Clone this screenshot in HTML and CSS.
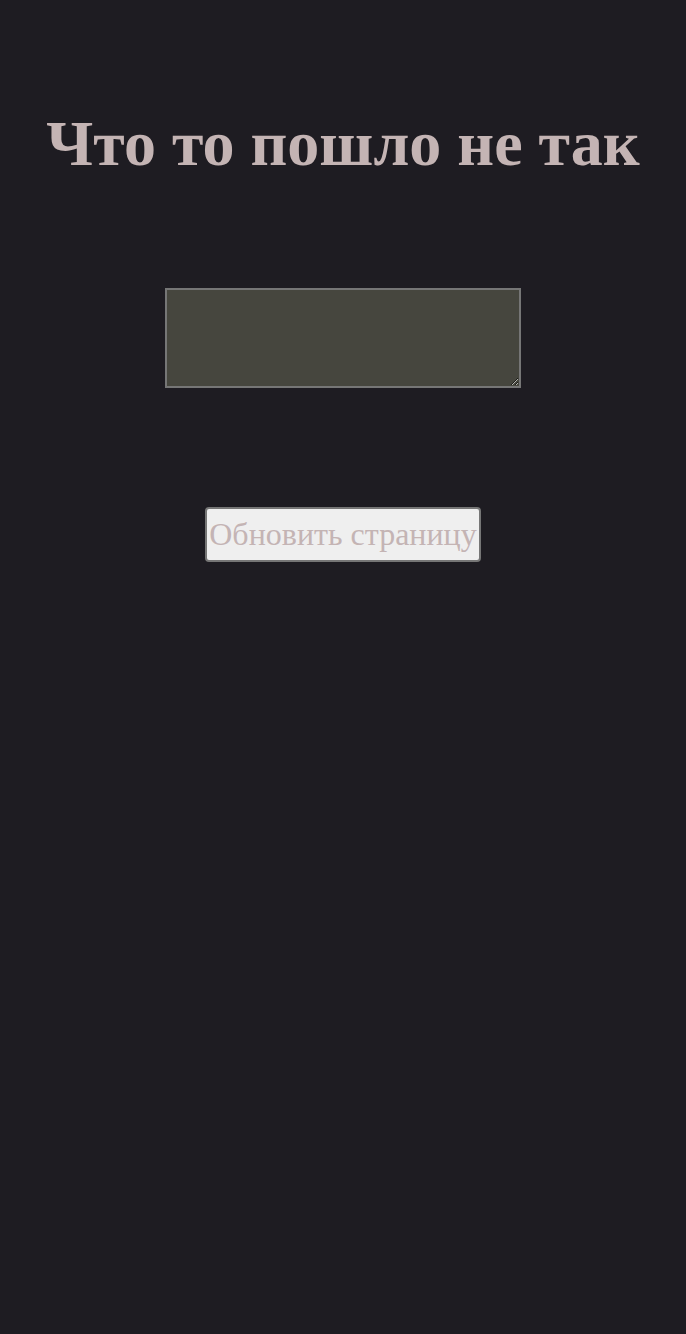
FILE: index.html
```html
<!DOCTYPE html>
<html lang="ru">
<head>
<meta charset="utf-8">
<link rel="stylesheet" href="styles.css">
</head>
<body>
<main class="page">
  <h1 class="title">Что то пошло не так</h1>
  <textarea class="details"></textarea>
  <button class="reload">Обновить страницу</button>
</main>
</body>
</html>
```
FILE: styles.css
```css
html, body {
  margin: 0;
  background: #1e1c22;
  min-height: 100%;
}
body {
  font-family: "Liberation Serif", "Times New Roman", serif;
  color: #c4b4b4;
}
.page {
  display: flex;
  flex-direction: column;
  align-items: center;
  padding-top: 100px;
}
.title {
  margin: 0;
  font-size: 64px;
  line-height: 88px;
  font-weight: bold;
  text-align: center;
}
.details {
  box-sizing: border-box;
  margin: 100px 0 0;
  width: 356px;
  height: 100px;
  background: #46463e;
  border: 2px solid #767676;
  color: #c4b4b4;
}
.reload {
  margin-top: 119px;
  box-sizing: border-box;
  height: 55px;
  padding: 0 2px;
  font-family: "Liberation Serif", "Times New Roman", serif;
  font-size: 32px;
  color: #c4b4b4;
  background: #efefef;
  border: 2px solid #767676;
  border-radius: 4px;
}
```
